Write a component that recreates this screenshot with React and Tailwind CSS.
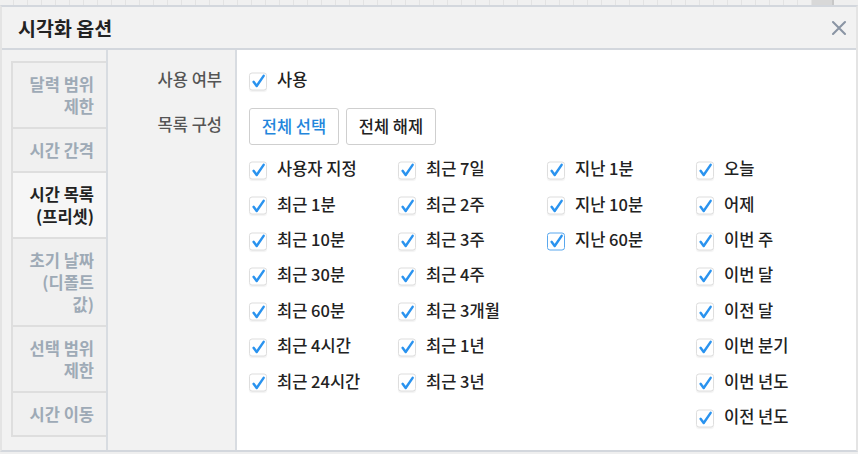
import React from "react";

const Check = ({ focused }) => (
  <span
    className={
      "flex-none w-[18px] h-[18px] rounded-[3px] bg-white flex items-center justify-center translate-y-[1.5px] " +
      (focused
        ? "border-[1.5px] border-[#5aa8ee]"
        : "border-[1.5px] border-[#dedede] shadow-[0_1px_1px_rgba(0,0,0,0.05)]")
    }
  >
    <svg width="15" height="15" viewBox="0 0 14 14">
      <path
        d="M2.4 7.8 L5.3 11.6 L11.8 2.2"
        fill="none"
        stroke="#2a93ef"
        strokeWidth="2.3"
        strokeLinecap="round"
        strokeLinejoin="round"
      />
    </svg>
  </span>
);

const Item = ({ label, focused }) => (
  <div className="flex items-center h-[35.43px] gap-[10px]">
    <Check focused={focused} />
    <span className="text-[16.5px] leading-[21px] font-medium text-[#222]">{label}</span>
  </div>
);

const columns = [
  ["사용자 지정", "최근 1분", "최근 10분", "최근 30분", "최근 60분", "최근 4시간", "최근 24시간"],
  ["최근 7일", "최근 2주", "최근 3주", "최근 4주", "최근 3개월", "최근 1년", "최근 3년"],
  ["지난 1분", "지난 10분", "지난 60분"],
  ["오늘", "어제", "이번 주", "이번 달", "이전 달", "이번 분기", "이번 년도", "이전 년도"],
];

const tabs = [
  { lines: ["달력 범위", "제한"] },
  { lines: ["시간 간격"] },
  { lines: ["시간 목록", "(프리셋)"], active: true },
  { lines: ["초기 날짜", "(디폴트", "값)"] },
  { lines: ["선택 범위", "제한"] },
  { lines: ["시간 이동"], last: true },
];

export default function App() {
  const segs = Array.from({ length: 58 });
  return (
    <div className="w-[858px] h-[454px] bg-[#efefef] overflow-hidden font-['Noto_Sans_CJK_KR','Noto_Sans',sans-serif]">
      {/* background strip */}
      <div className="h-[5px] flex bg-[#f0f0f0]">
        {segs.map((_, i) => (
          <div key={i} className="w-[14px] h-full border-r border-[#e3e3e3] flex-none" />
        ))}
        <div className="w-[22px] h-full bg-[#d8d8d8] border-r-2 border-[#c8c8c8] flex-none" />
        <div className="flex-1 h-full bg-[#efefef]" />
      </div>

      {/* dialog */}
      <div className="h-[447px] flex flex-col border-t-2 border-b-2 border-[#d3d7dd] border-x-2 border-x-[#e4e4e4]">
        {/* header */}
        <div className="h-[43px] flex-none flex items-center justify-between bg-[#f2f2f2] border-b-2 border-[#d3d7dd] pl-[16px] pr-[9px]">
          <span className="text-[19.5px] font-bold text-[#222] leading-none">시각화 옵션</span>
          <svg width="16" height="16" viewBox="0 0 16 16">
            <path d="M2 2 L14 14 M14 2 L2 14" stroke="#8a95a4" strokeWidth="2.1" strokeLinecap="round" />
          </svg>
        </div>

        {/* body */}
        <div className="flex-1 flex min-h-0">
          {/* sidebar */}
          <div className="w-[106px] flex-none bg-[#f2f2f2] border-r-2 border-[#d8dce1] pt-[11px] pl-[9px]">
            {tabs.map((t, i) => (
              <div
                key={i}
                className={
                  "border-t-2 border-l-2 border-[#dedede] py-[10px] pr-[12px] text-right text-[16.5px] leading-[22px] font-bold whitespace-nowrap " +
                  (t.last ? "border-b-2 " : "") +
                  (t.active ? "bg-[#f6f6f6] text-[#222]" : "bg-[#f0f0f0] text-[#9eaab6]")
                }
              >
                {t.lines.map((l, j) => (
                  <div key={j}>{l}</div>
                ))}
              </div>
            ))}
          </div>

          {/* labels column */}
          <div className="w-[129px] flex-none bg-[#f2f2f2] border-r-2 border-[#d8dce1] pt-[19px] pr-[13px] flex flex-col items-end">
            <div className="text-[16.5px] leading-[21px] font-medium text-[#555]">사용 여부</div>
            <div className="mt-[23.5px] text-[16.5px] leading-[21px] font-medium text-[#555]">목록 구성</div>
          </div>

          {/* content */}
          <div className="flex-1 bg-white pl-[12px] pt-[19px]">
            <div className="flex items-center h-[21px] gap-[10px]">
              <Check />
              <span className="text-[16.5px] leading-[21px] font-medium text-[#222]">사용</span>
            </div>
            <div className="flex gap-[7px] mt-[18px]">
              <button className="w-[90px] h-[37px] bg-white border border-[#cfcfcf] rounded-[3px] text-[16.5px] font-medium text-[#2386dc]">
                전체 선택
              </button>
              <button className="w-[90px] h-[37px] bg-white border border-[#cfcfcf] rounded-[3px] text-[16.5px] font-medium text-[#222]">
                전체 해제
              </button>
            </div>
            <div className="flex mt-[6px]">
              {columns.map((col, ci) => (
                <div key={ci} className="w-[149px] flex flex-col">
                  {col.map((label) => (
                    <Item key={label} label={label} focused={label === "지난 60분"} />
                  ))}
                </div>
              ))}
            </div>
          </div>
        </div>
      </div>
    </div>
  );
}
